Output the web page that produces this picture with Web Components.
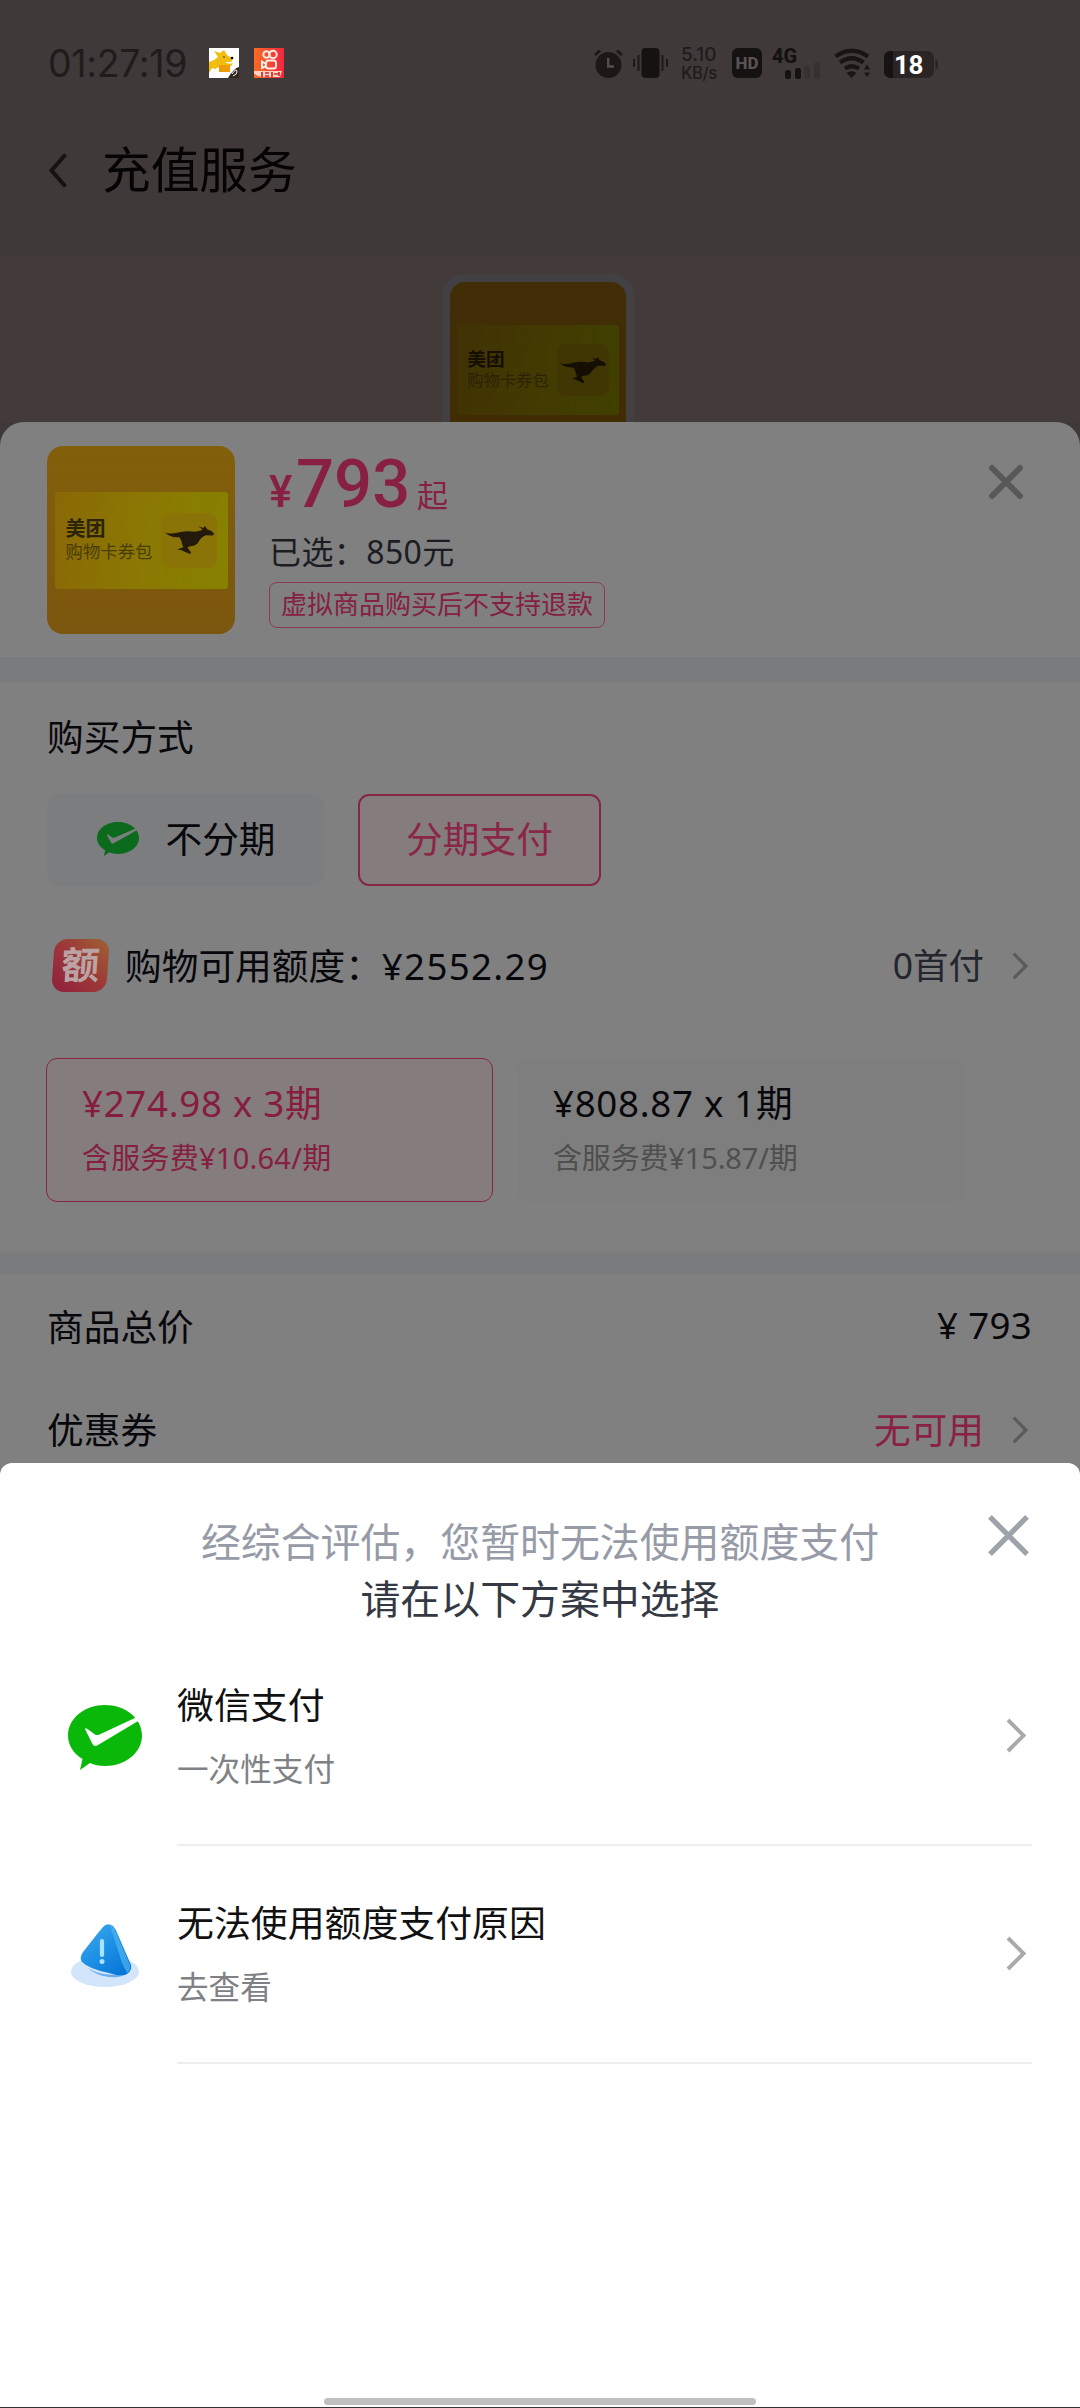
<!DOCTYPE html>
<html lang="zh-CN">
<head>
<meta charset="utf-8">
<title>充值服务</title>
<style>
html,body{margin:0;padding:0;width:1080px;height:2408px;overflow:hidden;background:#403939}
body{font-family:"Noto Sans","Noto Sans CJK SC",sans-serif;font-size:36.7px;color:#08080c}
</style>
</head>
<body>
<recharge-page></recharge-page>
<script>
const define = (name, html) => {
  const t = document.createElement('template');
  t.innerHTML = html;
  customElements.define(name, class extends HTMLElement {
    constructor() {
      super();
      this.attachShadow({ mode: 'open' }).appendChild(t.content.cloneNode(true));
    }
  });
};

const ICONS = {
  back: ['0 0 18 35', '<path d="M16.5 1.5 2.5 17.5 16.5 33.5" fill="none" stroke="#171212" stroke-width="4"/>'],
  chevron: ['0 0 20 35', '<path d="M2 2 17.500 17.500 2 33" fill="none" stroke="currentColor" stroke-width="4"/>'],
  close: ['0 0 42 42', '<path d="M2 2 40 40M40 2 2 40" fill="none" stroke="currentColor" stroke-width="5.400"/>'],
  closeRound: ['0 0 34 34', '<path d="M3 3 31 31M31 3 3 31" fill="none" stroke="currentColor" stroke-width="6" stroke-linecap="round"/>'],
  wechat: ['0 0 74 65', '<path fill="currentColor" d="M37 0C57 0 74 13 74 30.500S57 61 37 61C31 61 26 60 22 58L12 65 14.500 54C5 48 0 40 0 30.500 0 13 17 0 37 0Z"/><path d="M17 24Q17.500 22.500 19.500 24L27 29.500Q29 30.500 31.500 29.500L69 12 71 15.500 30 40Q26.500 42.500 24.500 39Z" fill="var(--tick,#fff)"/>'],
  kangaroo: ['0 0 118 82', '<path fill="currentColor" d="M0 19Q15 25 34 18Q55 13 72 17Q86 14 91 11L80 1 92 6 96 0 102 10Q112 12 118 22L116 28 98 27Q86 34 81 46Q77 57 61 59L54 62 63 78 60 82 38 70 29 69 44 62 41 52Q40 40 34 32Q16 36 0 19Z"/>'],
  warn: ['0 0 68 64', '<defs><linearGradient id="a" x1="0" y1="0" x2=".8" y2="1"><stop offset="0" stop-color="#3fabee"/><stop offset=".55" stop-color="#1d8fe4"/><stop offset="1" stop-color="#0875d8"/></linearGradient></defs><ellipse cx="34" cy="47.500" rx="34" ry="15.500" fill="#d3e5fa"/><path d="M17 44Q32 54 56 49Q52 54 38 53Q24 51 17 44Z" fill="#6aaaf0"/><path fill="url(#a)" d="M32 3Q36-2 42 2Q45 5 47 11L60 41Q61 47 56 50Q51 53 38 49Q18 45 11 38Q8 34 12 28L27 9Z"/><path d="M39 1Q43 3 45 9L59 41Q60 46 56 49L51 39Z" fill="#55b8ef" opacity=".65"/><path d="M31 17V31" stroke="#a8e4ff" stroke-width="4.200" stroke-linecap="round"/><circle cx="31" cy="37.500" r="2.500" fill="#a8e4ff"/>'],
  alarm: ['0 0 29 29', '<circle cx="14.500" cy="16" r="13" fill="#1c1818"/><path d="M1 6 6 1.500M28 6 23 1.500" stroke="#1c1818" stroke-width="2.800"/><path d="M14.200 9V17.500H20" fill="none" stroke="#554e4e" stroke-width="2.400"/>'],
  vibrate: ['0 0 37 30', '<rect x="9.500" width="18" height="30" rx="4" fill="#151312"/><path d="M6.500 7V23M2 11V19M30.500 7V23M35 11V19" stroke="#1c1918" stroke-width="2"/>'],
  signal: ['0 0 36 17', '<rect y="8" width="6" height="9" rx="2.500" fill="#151212"/><rect x="10" y="6" width="6" height="11" rx="2.500" fill="#151212"/><rect x="19" y="4" width="6" height="13" rx="2.500" fill="#383131"/><rect x="29" y="0" width="6" height="17" rx="2.500" fill="#383131"/>'],
  wifi: ['0 0 37 30', '<g fill="none" stroke="#181514" stroke-width="4.200"><path d="M1.500 8.500Q17.500-3 34 8.500"/><path d="M6 14.500Q17.500 6 29.500 14.500"/><path d="M11 20.500Q17.500 16 25 20.500"/></g><path d="M12.500 25Q17.500 21.500 22.500 25L17.500 30ZM30 21.500 33 16.500 36 21.500ZM30 24.500H36L33 29Z" fill="#181514"/>'],
  dog: ['0 0 30 30', '<path fill="#fff" d="M0 0H30V30H0Z"/><path fill="#f3bd10" d="M0 14Q5 13 9 9L5 3 11 5 15 2 18 7 24 11 22 14 16 14Q20 17 24 15L22 18H12L6 21 3 20 0 25Z"/><path d="M10 17H21V24H10Z" fill="#f09b08"/><circle cx="23" cy="10" r="1.300"/><circle cx="15" cy="9" r=".7"/><path fill="#33251a" d="M19 30Q25 20 30 19V30Z"/><path d="M23 26Q27 20 28 23T24 28" fill="none" stroke="#fff" stroke-width="1"/>'],
  kwai: ['0 0 30 30', '<defs><linearGradient id="k"><stop stop-color="#f96b24"/><stop offset="1" stop-color="#f4263d"/></linearGradient></defs><path fill="url(#k)" d="M0 0H30V30H0Z"/><g fill="none" stroke="#ffece4" stroke-width="2"><circle cx="12.500" cy="6.500" r="3.200"/><circle cx="19" cy="6.500" r="3.700"/><rect x="12" y="12.500" width="10" height="8" rx="2.500"/><path d="M12 16 8 13.500V20L12 18"/></g><path fill="#ffd4c4" d="M0 23H28L26 29H10Q3 29 0 25Z"/><path d="M8 24V29M11 25H15M11 28H15M18 24V29M20 26H24M25 24V28" stroke="#c92c2d" stroke-width="1.700"/>'],
  battery: ['0 0 54 27', '<rect width="50" height="27" rx="7" fill="#2b2424"/><path d="M9 0H7Q0 0 0 7V20Q0 27 7 27H9Z" fill="#171313"/><path d="M51.500 8Q54 9 54 13.500T51.500 19Z" fill="#2b2424"/>']
};
customElements.define('ui-icon', class extends HTMLElement {
  connectedCallback() {
    if (this.shadowRoot) return;
    const [box, body] = ICONS[this.getAttribute('name')];
    this.attachShadow({ mode: 'open' }).innerHTML =
      `<style>:host{display:block;flex:none}svg{display:block;width:100%;height:100%;overflow:visible}</style><svg viewBox="${box}" preserveAspectRatio="none">${body}</svg>`;
  }
});

define('status-bar', `<style>
:host{display:flex;flex:none;height:83px;box-sizing:border-box;padding:48px 0 0 48px;align-items:flex-start;color:#211b1b}
.clock{width:161px;font:400 37.500px/31px Inter,sans-serif;letter-spacing:-.35px}
.app{width:30px;height:30px;margin-right:15px}
.rate{width:51px;font:500 19px/18px Inter,sans-serif;margin-left:12px;margin-top:-2px;display:flex;flex-direction:column;height:36px}
.hd{width:30px;height:30px;border-radius:6px;background:#151312;color:#5b5353;font:800 17px/31px Roboto,sans-serif;text-align:center;margin-right:10px}
.net{width:62px;height:30px;display:flex;flex-direction:column;font:800 20px/16px Roboto,sans-serif;color:#141111}
.net ui-icon{margin:-2px 0 0 13px}
.bat{display:grid;margin-top:3px;margin-left:13px;font:700 26px/27px Roboto,sans-serif;color:#fff;width:54px}
.bat>*{grid-area:1/1}.bat span{padding-left:10px;letter-spacing:-.3px;line-height:29px}
</style>
<span class="clock">01:27:19</span><ui-icon class="app" name="dog"></ui-icon><ui-icon class="app" name="kwai"></ui-icon>
<ui-icon name="alarm" style="width:29px;height:29px;margin:1px 9px 0 295px"></ui-icon>
<ui-icon name="vibrate" style="width:37px;height:30px"></ui-icon>
<div class="rate"><span>5.10</span><span style="font-size:16.800px;letter-spacing:-.5px">KB/s</span></div>
<span class="hd">HD</span>
<div class="net"><span>4G</span><ui-icon name="signal" style="width:36px;height:17px"></ui-icon></div>
<ui-icon name="wifi" style="width:37px;height:30px"></ui-icon>
<div class="bat"><ui-icon name="battery" style="width:54px;height:27px"></ui-icon><span>18</span></div>`);

define('nav-header', `<style>
:host{display:flex;flex:none;align-items:center;height:174px;box-sizing:border-box;padding:0 49px;font-size:48.700px;line-height:60px;color:#050303}
span{margin-bottom:3px}
ui-icon{width:18px;height:35px;margin-right:35px}
</style><ui-icon name="back"></ui-icon><span><slot></slot></span>`);

define('gift-card', `<style>
:host{display:flex;flex:none;flex-direction:column;justify-content:center;align-items:center;box-sizing:border-box;width:188px;height:188px;border-radius:16px;background:linear-gradient(var(--g1,#82600a),var(--g2,#7b560e))}
.in{display:flex;box-sizing:border-box;width:173px;height:97px;border-radius:3px;align-items:center;justify-content:space-between;padding:0 11px 0 11px;background:linear-gradient(100deg,var(--b1,#8a6806),var(--b2,#8b7803) 50%,var(--b3,#868200))}
.t{display:flex;flex-direction:column;color:var(--ink,#2a2408)}
b{font-size:20px;line-height:23px}.s{font-size:17.400px;line-height:23px;opacity:var(--so,.68);white-space:nowrap}
.tile{display:flex;align-items:center;justify-content:center;width:55px;height:55px;border-radius:9px;background:var(--tile,#8a7407)}
ui-icon{width:49px;height:28px;color:var(--ink,#241a0b)}
</style><div class="in"><div class="t"><b>美团</b><span class="s">购物卡券包</span></div><div class="tile"><ui-icon name="kangaroo"></ui-icon></div></div>`);

define('hero-banner', `<style>
:host{display:flex;flex:none;justify-content:center;align-items:flex-start;height:165px;box-sizing:border-box;padding-top:17px;background:#423b3a;overflow:hidden}
.frame{padding:8px;border-radius:22px;background:#434043;height:200px;box-sizing:border-box;margin-left:-4px}
gift-card{zoom:.936;--g1:#412e06;--g2:#402b05;--b1:#403204;--b2:#433a02;--b3:#404000;--tile:#403604;--ink:#150f03;--so:.5}
</style><div class="frame"><gift-card></gift-card></div>`);

define('product-summary', `<style>
:host{display:flex;flex:none;box-sizing:border-box;height:235px;padding:24px 57px 0 47px}
.info{flex:1;margin-left:34px;display:flex;flex-direction:column;align-items:flex-start}
.price{display:flex;align-items:baseline;height:76px;color:#882043;font-family:Roboto,"Noto Sans CJK SC",sans-serif;font-weight:500}
.y{font-size:44px;line-height:60px;width:27px}.n{font-size:67px;line-height:76px;letter-spacing:0;width:121px}.q{font-size:31px;font-weight:400}
.sel{font-size:32px;line-height:40px;margin-top:10px;color:#1b1d23;letter-spacing:.4px}
.tag{box-sizing:border-box;width:336px;height:46px;border:1.500px solid #8a3a55;border-radius:8px;margin-top:10px;text-align:center;font-size:26px;line-height:43px;color:#852040;white-space:nowrap}
ui-icon{width:34px;height:34px;margin-top:19px;color:#585858}
</style><gift-card></gift-card><div class="info"><div class="price"><span class="y">¥</span><span class="n">793</span><span class="q">起</span></div><span class="sel">已选：850元</span><span class="tag">虚拟商品购买后不支持退款</span></div><ui-icon name="closeRound"></ui-icon>`);

define('pay-option', `<style>
:host{display:flex;align-items:center;justify-content:center;gap:26px;box-sizing:border-box;height:92px;padding-bottom:6px;border-radius:11px;background:#7c7d7f}
:host([selected]){border:2px solid #842644;background:#847c7d;color:#8a2646}
</style><slot></slot>`);

define('plan-card', `<style>
:host{display:flex;flex:none;flex-direction:column;box-sizing:border-box;width:447px;height:144px;padding:22px 35px;border:1.500px solid transparent;border-radius:11px;background:#7e7e7e}
:host([selected]){border-color:#842644;background:#847c7d;color:#861d3f}
.a{line-height:44px;letter-spacing:.7px;white-space:nowrap}.b{font-size:29px;line-height:40px;margin-top:13px;letter-spacing:var(--ls,.25px);color:#4f4f4f;white-space:nowrap}
:host([selected]) .b{color:#852040}
</style><span class="a"><slot></slot></span><span class="b"><slot name="sub"></slot></span>`);

define('info-row', `<style>
:host{display:flex;flex:none;align-items:center;height:var(--h,103px);box-sizing:border-box;padding:0 51px 0 var(--pl,47px);white-space:nowrap}
.k,.v{margin-bottom:4px}
.v{margin-left:auto}
</style><slot name="icon"></slot><span class="k"><slot></slot></span><span class="v"><slot name="value"></slot></span><slot name="end"></slot>`);

define('purchase-sheet', `<style>
:host{display:flex;flex-direction:column;height:1053px;flex:none;background:#808080;border-radius:24px 24px 0 0}
.band{background:#7a7b7d;flex:none}
.title{flex:none;height:50px;line-height:50px;padding:30px 47px 0}
.opts{flex:none;display:flex;gap:34px;padding:32px 47px 0}
.quota{margin-top:30px;--h:100px;--pl:53px}
.badge{width:55px;height:53px;border-radius:13px;margin-right:17px;margin-bottom:1px;background:linear-gradient(45deg,#8f1f3d,#9e3a38 55%,#9c6434);transform:skewX(-4deg);color:#b9a3a3;font-weight:700;font-size:38px;line-height:50px;text-align:center}
.num{letter-spacing:1.300px}
.chev{width:16px;height:28px;color:#5b5b5b;margin-left:28px;margin-right:1px}
.plans{flex:none;display:flex;gap:24px;padding:42px 46px 50px}
</style>
<product-summary></product-summary>
<div class="band" style="height:25px"></div>
<div class="title">购买方式</div>
<div class="opts">
<pay-option style="width:277px"><ui-icon name="wechat" style="width:42px;height:34px;margin:4px 0 0 2px;color:#0b6a1c;--tick:#7c7d7f"></ui-icon><span>不分期</span></pay-option>
<pay-option selected style="width:243px">分期支付</pay-option>
</div>
<info-row class="quota"><span class="badge" slot="icon">额</span>购物可用额度：<span class="num">¥2552.29</span><span slot="value" style="color:#24262d;font-size:35.500px">0首付</span><ui-icon slot="end" class="chev" name="chevron"></ui-icon></info-row>
<div class="plans">
<plan-card selected>¥274.98 x 3期<span slot="sub">含服务费¥10.64/期</span></plan-card>
<plan-card style="--ls:-.15px">¥808.87 x 1期<span slot="sub">含服务费¥15.87/期</span></plan-card>
</div>
<div class="band" style="height:23px"></div>
<info-row>商品总价<span slot="value" style="margin-right:-3px;letter-spacing:.3px">¥ 793</span></info-row>
<info-row>优惠券<span slot="value" style="color:#8a2044">无可用</span><ui-icon slot="end" class="chev" name="chevron"></ui-icon></info-row>`);

define('choice-row', `<style>
:host{display:flex;flex:none;height:218px;box-sizing:border-box;padding:0 48px 0 67px;align-items:stretch}
.ic{width:75px;display:flex;align-items:center;justify-content:center;margin-right:35px;padding-top:1px}
.main{flex:1;display:flex;align-items:center;border-bottom:2px solid #eee;padding-right:6px}
.tx{flex:1;display:flex;flex-direction:column;gap:19px;height:184px;box-sizing:border-box;padding-top:38px}
.a{font-size:36.900px;line-height:46px;color:#111}.b{font-size:31.600px;line-height:44px;color:#808184}
ui-icon{width:20px;height:35px;color:#aaa;margin-bottom:1px}
</style><div class="ic"><slot name="icon"></slot></div><div class="main"><div class="tx"><span class="a"><slot></slot></span><span class="b"><slot name="sub"></slot></span></div><ui-icon name="chevron"></ui-icon></div>`);

define('fallback-dialog', `<style>
:host{display:flex;flex-direction:column;flex:none;height:945px;margin-top:-12px;position:relative;background:#fff;border-radius:12px 12px 0 0;box-sizing:border-box;border-bottom:1px solid #333}
.head{display:grid;grid-template-columns:92px 1fr 92px;height:165px;text-align:center;font-size:39.900px}
.msg{grid-column:2;padding-top:50px;line-height:57px;color:#969ba7;white-space:nowrap}
.msg span{display:block;color:#353944}
.x{width:41px;height:41px;margin-top:52px;color:#9ea2ab}
.home{width:432px;height:7px;border-radius:4px;background:#c0c0c0;margin:auto auto 2px}
</style>
<div class="head"><div class="msg">经综合评估，您暂时无法使用额度支付<span>请在以下方案中选择</span></div><ui-icon class="x" name="close"></ui-icon></div>
<choice-row><ui-icon slot="icon" name="wechat" style="width:74px;height:65px;color:#0ab80a"></ui-icon>微信支付<span slot="sub">一次性支付</span></choice-row>
<choice-row><ui-icon slot="icon" name="warn" style="width:68px;height:64px"></ui-icon>无法使用额度支付原因<span slot="sub">去查看</span></choice-row>
<div class="home"></div>`);

define('recharge-page', `<style>:host{display:flex;flex-direction:column;width:1080px;height:2408px;overflow:hidden;background:linear-gradient(#403939 460px,#808080 460px)}</style>
<status-bar></status-bar><nav-header>充值服务</nav-header><hero-banner></hero-banner><purchase-sheet></purchase-sheet><fallback-dialog></fallback-dialog>`);
</script>
</body>
</html>
